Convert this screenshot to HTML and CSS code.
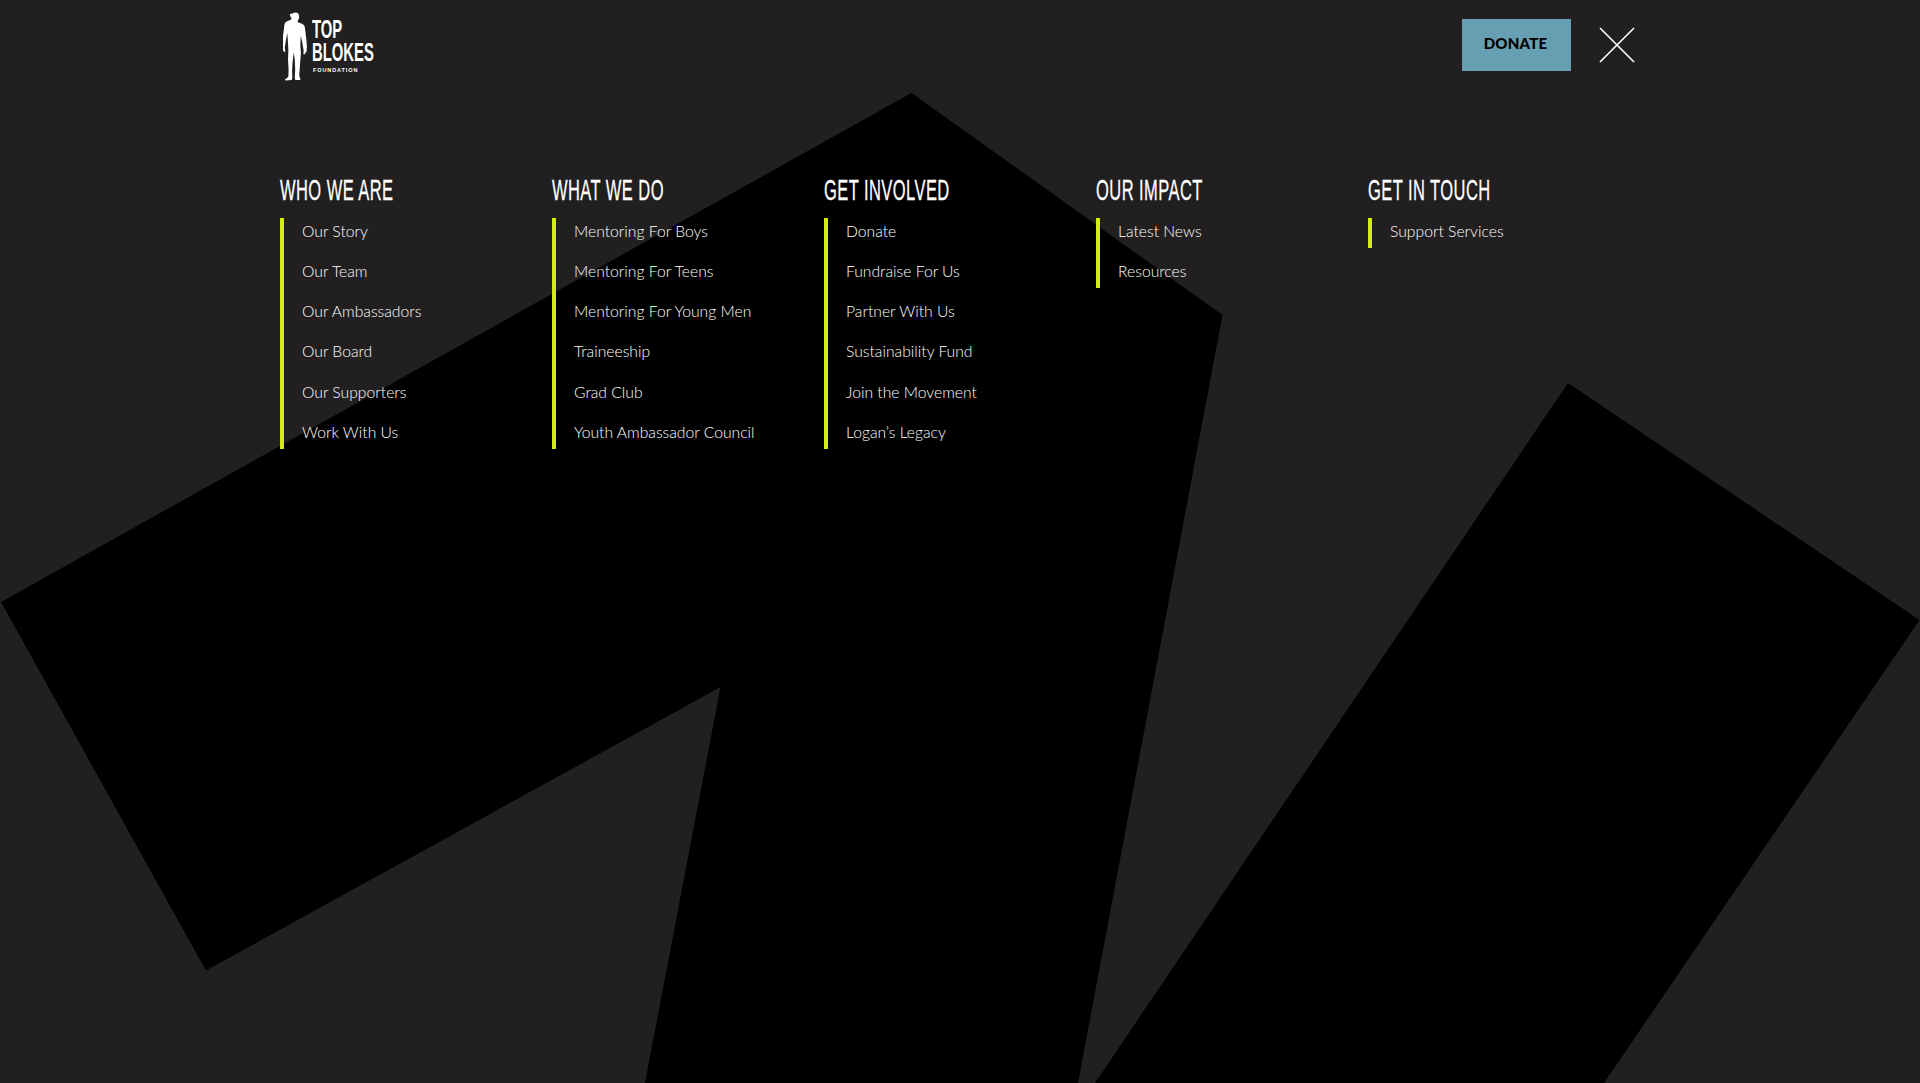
FILE: index.html
```html
<!DOCTYPE html>
<html lang="en">
<head>
<meta charset="utf-8">
<title>Top Blokes Foundation</title>
<link rel="stylesheet" href="styles.css">
</head>
<body>
<svg class="backdrop" viewBox="0 0 1920 1083" aria-hidden="true">
  <polygon points="911.5,93 1222.5,315 1078,1083 645,1083 720.5,687 206,970.5 1,602"/>
  <polygon points="1568,383 1919.5,620 1604,1083 1095,1083"/>
</svg>
<div class="page">
  <header class="top">
    <a class="logo" href="#">
      <svg class="man" viewBox="0 0 24 72" aria-hidden="true">
        <path d="M12.5 0.5c2.4 0 3.8 1.8 3.7 4.2 0 1.6-.6 3-1.5 4l.2 1.6 4.2 1.5c2 .8 2.7 2.2 3 4.4l1.4 11.5.6 7.5-.3 4.5-2.3 3.3-1-.3.3-3.5-1.5-9-1.5-6-.4 9.5.6 8-1 12.5-.7 10.5 1.2 3.2-.4 1.1h-4.8l-.5-2.2.4-8.5-.4-9.5-1-8-1.2 9.5-.6 9.5.3 6.6-.6 2.5-6.4.6-.5-1 3.4-2.7.3-7-.6-11 .4-9-.5-9-.6-8.5-1.2 6-1.4 9 .6 3.8-1.2.4-2.3-3.4.3-5.2 1-8.5 1.2-10c.3-2.2 1.2-3.4 3-4.1l4-1.7.1-1.7c-1-1-1.5-2.4-1.5-4C8.700 2.300 10.100 .5 12.500 .5z"/>
      </svg>
      <span class="wordmark">
        <span class="wm-line">TOP</span>
        <span class="wm-line">BLOKES</span>
        <span class="wm-small">FOUNDATION</span>
      </span>
    </a>
    <div class="actions">
      <a class="donate" href="#">DONATE</a>
      <svg class="close" viewBox="0 0 36 36" aria-label="Close">
        <path d="M1 1 35 35M35 1 1 35"/>
      </svg>
    </div>
  </header>
  <nav class="menu">
    <section class="col">
      <h2><span>WHO WE ARE</span></h2>
      <ul>
        <li>Our Story</li><li>Our Team</li><li>Our Ambassadors</li><li>Our Board</li><li>Our Supporters</li><li>Work With Us</li>
      </ul>
    </section>
    <section class="col">
      <h2><span>WHAT WE DO</span></h2>
      <ul>
        <li>Mentoring For Boys</li><li>Mentoring For Teens</li><li>Mentoring For Young Men</li><li>Traineeship</li><li>Grad Club</li><li>Youth Ambassador Council</li>
      </ul>
    </section>
    <section class="col">
      <h2><span>GET INVOLVED</span></h2>
      <ul>
        <li>Donate</li><li>Fundraise For Us</li><li>Partner With Us</li><li>Sustainability Fund</li><li>Join the Movement</li><li>Logan’s Legacy</li>
      </ul>
    </section>
    <section class="col">
      <h2><span>OUR IMPACT</span></h2>
      <ul>
        <li>Latest News</li><li>Resources</li>
      </ul>
    </section>
    <section class="col">
      <h2><span>GET IN TOUCH</span></h2>
      <ul>
        <li>Support Services</li>
      </ul>
    </section>
  </nav>
</div>
</body>
</html>
```

FILE: styles.css
```css
* { box-sizing: border-box; }
html, body { margin: 0; height: 100%; }
body {
  position: relative;
  height: 1083px;
  overflow: hidden;
  background: #221f20;
  color: #fff;
  font-family: "Lato", "Liberation Sans", sans-serif;
}
.backdrop {
  position: absolute;
  inset: 0;
  width: 1920px;
  height: 1083px;
  fill: #000;
}
.page {
  position: relative;
  width: 1360px;
  margin: 0 auto;
}
.top {
  display: flex;
  justify-content: space-between;
  align-items: flex-start;
  height: 166px;
  padding: 12px 0 0 3px;
}
.logo {
  display: flex;
  align-items: flex-start;
  gap: 5px;
  width: 100px;
  color: #fff;
  text-decoration: none;
}
.man { flex: none; width: 24px; height: 71px; fill: #fff; display: block; }
.wordmark { display: flex; flex-direction: column; padding-top: 6px; width: 70px; }
.wm-line {
  display: block;
  width: 114px;
  font-family: "Liberation Sans", sans-serif;
  font-weight: 700;
  font-size: 26.5px;
  line-height: 23px;
  transform: scaleX(.56);
  transform-origin: left;
}
.wm-small {
  font-family: "Liberation Sans", sans-serif;
  font-weight: 700;
  font-size: 5.5px;
  letter-spacing: 0.9px;
  line-height: 6px;
  margin: 3px 0 0 1px;
  white-space: nowrap;
}
.actions {
  display: flex;
  align-items: center;
  gap: 28px;
  margin-top: 7px;
  padding-right: 5px;
}
.donate {
  display: flex;
  align-items: center;
  justify-content: center;
  width: 109px;
  height: 52px;
  background: #659fb1;
  color: #000;
  font-family: "Lato", sans-serif;
  font-weight: 900;
  font-size: 15px;
  letter-spacing: 0.2px;
  text-decoration: none;
  padding: 0 2px 4px 0;
}
.close { width: 36px; height: 36px; stroke: #fff; stroke-width: 1.6; fill: none; display: block; }
.menu {
  display: grid;
  grid-template-columns: repeat(5, 272px);
}
h2 {
  margin: 0;
  height: 52px;
  font-family: "Liberation Sans", sans-serif;
  font-weight: 400;
  font-size: 30px;
  line-height: 48px;
  letter-spacing: 0.8px;
  white-space: nowrap;
}
h2 span {
  display: inline-block;
  transform: scaleX(.55);
  transform-origin: left;
  -webkit-text-stroke: 0.3px #fff;
}
ul {
  list-style: none;
  margin: 0;
  padding: 0 0 0 18px;
  width: max-content;
  min-width: 180px;
  border-left: 4px solid #d3ec15;
}
li {
  height: 40.15px;
  font-size: 15.7px;
  font-weight: 300;
  line-height: 26px;
  color: #fff;
  white-space: nowrap;
}
li:last-child { height: 30px; }
```
